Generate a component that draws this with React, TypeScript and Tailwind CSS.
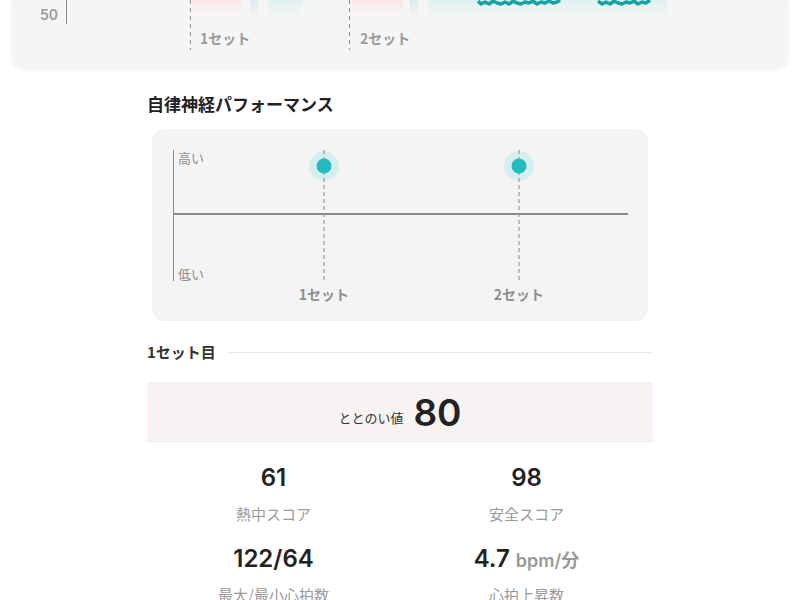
import React from 'react'

const jp = { fontFamily: '"Noto Sans CJK JP", "Noto Sans", sans-serif' }
const num = { fontFamily: 'Inter, "Noto Sans CJK JP", sans-serif' }

function TopChart() {
  // chart continues above the viewport; only the bottom edge is visible
  return (
    <svg width="776" height="68" className="block">
      <defs>
        <linearGradient id="pink" x1="0" y1="0" x2="0" y2="1">
          <stop offset="0" stopColor="#fbe6e6" />
          <stop offset="1" stopColor="#f5f5f5" stopOpacity="0" />
        </linearGradient>
        <linearGradient id="blue" x1="0" y1="0" x2="0" y2="1">
          <stop offset="0" stopColor="#dbe9f3" />
          <stop offset="1" stopColor="#f5f5f5" stopOpacity="0" />
        </linearGradient>
        <linearGradient id="teal" x1="0" y1="0" x2="0" y2="1">
          <stop offset="0" stopColor="#ddf1f0" />
          <stop offset="1" stopColor="#f5f5f5" stopOpacity="0" />
        </linearGradient>
      </defs>
      <line x1="54.5" y1="0" x2="54.5" y2="24" stroke="#8a8a8a" strokeWidth="1" />
      <text x="28" y="20" fontSize="14" fontWeight="600" fill="#9a9a9a" style={num}>50</text>

      <rect x="180" y="0" width="50" height="22" fill="url(#pink)" />
      <rect x="238" y="0" width="8" height="22" fill="url(#blue)" />
      <rect x="256" y="0" width="34" height="24" fill="url(#teal)" />
      <rect x="340" y="0" width="51" height="22" fill="url(#pink)" />
      <rect x="398" y="0" width="8" height="22" fill="url(#blue)" />
      <rect x="416" y="0" width="239" height="24" fill="url(#teal)" />

      <polyline
        points="466,1 469,4 473,2 477,4 481,1 485,3 489,4 493,2 497,4 501,1 505,3 509,4 513,2 517,3 521,1 525,4 529,2 533,3 537,1 541,3 545,2 548,0"
        fill="none" stroke="#17a3a3" strokeWidth="3.5" strokeLinejoin="round" />
      <polyline
        points="586,1 590,4 594,2 598,4 602,1 606,3 610,4 614,2 618,3 622,1 626,4 630,2 634,3 638,0"
        fill="none" stroke="#17a3a3" strokeWidth="3.5" strokeLinejoin="round" />

      <line x1="178.5" y1="0" x2="178.5" y2="50" stroke="#9a9a9a" strokeWidth="1.2" strokeDasharray="4 4" />
      <line x1="337.5" y1="0" x2="337.5" y2="50" stroke="#9a9a9a" strokeWidth="1.2" strokeDasharray="4 4" />
      <text x="188" y="44" fontSize="14" fontWeight="600" fill="#9a9a9a" style={jp}>1セット</text>
      <text x="348" y="44" fontSize="14" fontWeight="600" fill="#9a9a9a" style={jp}>2セット</text>
    </svg>
  )
}

function NerveChart() {
  const sets = [
    { x: 172, label: '1セット' },
    { x: 367, label: '2セット' },
  ]
  return (
    <svg width="496" height="192" className="block">
      <line x1="21.5" y1="21" x2="21.5" y2="152" stroke="#8a8a8a" strokeWidth="1" />
      <line x1="21" y1="85" x2="476" y2="85" stroke="#8a8a8a" strokeWidth="2" />
      <text x="26" y="34" fontSize="13" fill="#8f8f8f" style={jp}>高い</text>
      <text x="26" y="150" fontSize="13" fill="#8f8f8f" style={jp}>低い</text>
      {sets.map((s) => (
        <g key={s.label}>
          <circle cx={s.x} cy="37" r="15" fill="#d5eeee" />
          <line x1={s.x} y1="21" x2={s.x} y2="152" stroke="#9a9a9a" strokeWidth="1.2" strokeDasharray="4 3" />
          <circle cx={s.x} cy="37" r="7.5" fill="#22bcc0" />
          <text x={s.x} y="171" fontSize="14" fontWeight="600" fill="#8f8f8f" textAnchor="middle" style={jp}>{s.label}</text>
        </g>
      ))}
    </svg>
  )
}

function Stat({ value, unit, label }: { value: string; unit?: string; label: string }) {
  return (
    <div className="flex flex-col items-center">
      <div className="h-[30px] leading-[30px] text-[24px] font-semibold text-[#222]" style={num}>
        {value}
        {unit && <span className="ml-[6px] text-[18px] font-semibold text-[#999]">{unit}</span>}
      </div>
      <div className="mt-[10px] h-[22px] leading-[22px] text-[15px] text-[#9a9a9a]">{label}</div>
    </div>
  )
}

export default function App() {
  return (
    <div className="w-[800px] h-[600px] overflow-hidden bg-white" style={jp}>
      <div className="mx-3 h-[68px] rounded-b-xl bg-[#f5f5f5] shadow-[0_2px_4px_rgba(0,0,0,0.06)] overflow-hidden">
        <TopChart />
      </div>

      <div className="w-[506px] mx-auto">
        <h2 className="mt-[25px] h-[22px] leading-[22px] text-[17px] font-bold text-[#222]">自律神経パフォーマンス</h2>

        <div className="mt-[14px] mx-[5px] h-[192px] rounded-xl bg-[#f5f4f4]">
          <NerveChart />
        </div>

        <div className="mt-[20px] h-[22px] flex items-center gap-[11px]">
          <span className="text-[15px] font-bold text-[#333]">1セット目</span>
          <div className="flex-1 h-px bg-[#e8e8e8]" />
        </div>

        <div className="mt-[19px] h-[61px] bg-[#f7f3f3] flex items-center justify-center gap-[10px]">
          <span className="text-[13px] text-[#333] mt-[10px]">ととのい値</span>
          <span className="text-[37px] leading-none font-semibold text-[#222]" style={num}>80</span>
        </div>

        <div className="mt-[20px] grid grid-cols-2 gap-y-[19px]">
          <Stat value="61" label="熱中スコア" />
          <Stat value="98" label="安全スコア" />
          <Stat value="122/64" label="最大/最小心拍数" />
          <Stat value="4.7" unit="bpm/分" label="心拍上昇数" />
        </div>
      </div>
    </div>
  )
}
